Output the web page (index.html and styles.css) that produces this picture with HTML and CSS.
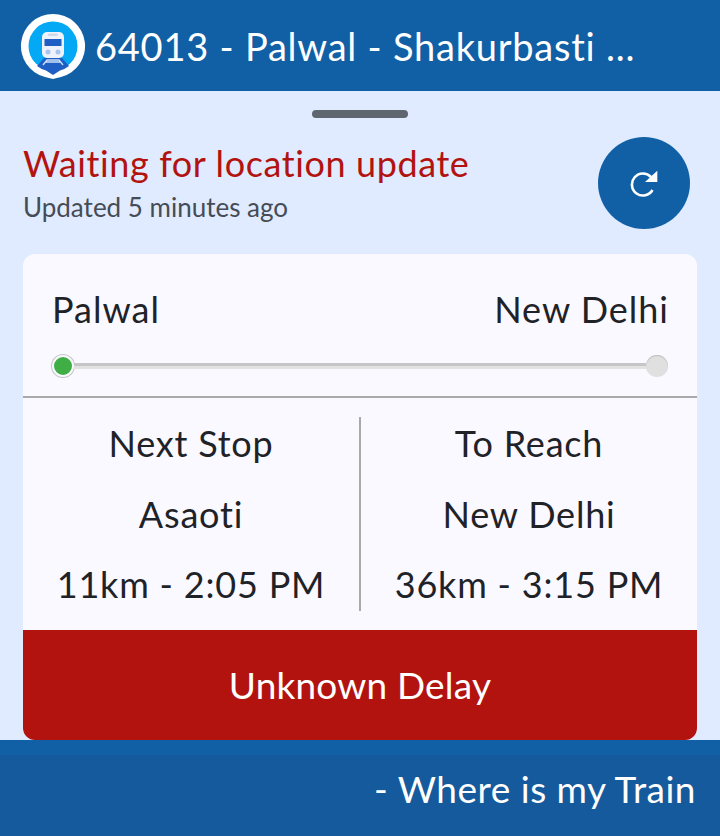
FILE: index.html
```html
<!DOCTYPE html>
<html lang="en">
<head>
<meta charset="utf-8">
<title>Where is my Train</title>
<link rel="stylesheet" href="styles.css">
</head>
<body>
<div class="page">
  <header class="topbar">
    <svg class="logo" viewBox="0 0 66 66" width="66" height="66">
      <path d="M33 1a32 32 0 0 1 8 63L33 66l-8-2A32 32 0 0 1 33 1z" fill="#fff"/>
      <circle cx="33" cy="33" r="24.500" fill="#03a9f4"/>
      <path d="M24 45h18l7 8a24.500 24.500 0 0 1-9 4.500L33 62l-7-4.500a24.500 24.500 0 0 1-9-4.500z" fill="#1f5fc4"/>
      <rect x="22" y="19" width="22" height="26" rx="5" fill="#eef3fb"/>
      <rect x="24.500" y="26" width="17" height="7" fill="#1f5fc4"/>
      <rect x="28" y="20.500" width="10" height="2.500" rx="1.200" fill="#cfd8ea"/>
      <circle cx="28" cy="39" r="2.500" fill="#a9c4ee"/>
      <circle cx="38" cy="39" r="2.500" fill="#a9c4ee"/>
      <path d="M23 52l4-5h12l4 5M26 49h14" fill="none" stroke="#cfe0f7" stroke-width="1.300"/>
    </svg>
    <h1 class="title">64013 - Palwal - Shakurbasti ...</h1>
  </header>
  <main class="sheet">
    <div class="handle"></div>
    <section class="status">
      <div class="status-text">
        <div class="waiting">Waiting for location update</div>
        <div class="updated">Updated 5 minutes ago</div>
      </div>
      <button class="refresh" aria-label="Refresh">
        <svg viewBox="0 0 28 28" width="28" height="28">
          <path d="M22.500 21A11 11 0 1 1 21 8" fill="none" stroke="#fff" stroke-width="2.600"/>
          <path d="M27.300 1.700V13H15z" fill="#fff"/>
        </svg>
      </button>
    </section>
    <section class="card">
      <div class="route">
        <div class="ends"><span>Palwal</span><span>New Delhi</span></div>
        <div class="track">
          <span class="dot start"></span>
          <span class="line"></span>
          <span class="dot end"></span>
        </div>
      </div>
      <div class="stops">
        <div class="stop">
          <div class="stop-label">Next Stop</div>
          <div>Asaoti</div>
          <div>11km - 2:05 PM</div>
        </div>
        <div class="stop">
          <div class="stop-label">To Reach</div>
          <div>New Delhi</div>
          <div>36km - 3:15 PM</div>
        </div>
      </div>
      <div class="delay">Unknown Delay</div>
    </section>
  </main>
  <footer class="bottombar">- Where is my Train</footer>
</div>
</body>
</html>
```
FILE: styles.css
```css
* { box-sizing: border-box; }
html, body { margin: 0; padding: 0; }
body { font-family: "Lato", "Noto Sans", sans-serif; color: #1f2328; background: #e0ebff; }
.page { width: 720px; height: 836px; display: flex; flex-direction: column; overflow: hidden; }

.topbar { height: 91px; background: #1160a6; display: flex; align-items: center; padding: 0 0 0 20px; gap: 9px; flex: none; }
.logo { flex: none; display: block; }
.title { margin: 0; font-size: 38px; font-weight: 400; color: #fff; white-space: nowrap; letter-spacing: 0.77px; }

.sheet { flex: 1; background: #e0ebff; padding: 19px 23px 0; display: flex; flex-direction: column; }
.handle { width: 96px; height: 8px; border-radius: 4px; background: #5f6670; align-self: center; flex: none; }

.status { display: flex; justify-content: space-between; align-items: flex-start; margin-top: 19px; height: 92px; padding-right: 7px; flex: none; }
.waiting { font-size: 36px; line-height: 40px; color: #b2130f; margin-top: 6px; letter-spacing: 0.6px; }
.updated { font-size: 26px; line-height: 30px; color: #454c55; margin-top: 9px; }
.refresh { width: 92px; height: 92px; border-radius: 50%; border: 0; padding: 0; background: #1160a6; display: flex; align-items: center; justify-content: center; }
.refresh svg { display: block; }

.card { margin-top: 25px; height: 486px; background: #faf9ff; border-radius: 12px; overflow: hidden; display: flex; flex-direction: column; }
.route { height: 144px; padding: 33px 29px 0; border-bottom: 2px solid #a9a9a9; flex: none; }
.ends { display: flex; justify-content: space-between; font-size: 36px; line-height: 44px; letter-spacing: 1px; margin-right: -1px; }
.track { display: flex; align-items: center; margin-top: 24px; }
.dot { width: 22px; height: 22px; border-radius: 50%; flex: none; }
.dot.start { background: #3fae44; border: 2px solid #faf9ff; box-shadow: 0 0 0 1px #c4c8c4; }
.dot.end { background: #e0e0e0; box-shadow: inset 0 1px 1px #bdbdbd; }
.line { flex: 1; height: 6px; background: #e2e2e2; border-top: 3px solid #c6c6c6; margin-top: -1px; }

.stops { flex: 1; display: grid; grid-template-columns: 338px 1fr; padding: 19px 0; }
.stop { display: flex; flex-direction: column; justify-content: space-between; align-items: center; font-size: 36px; line-height: 54px; letter-spacing: 0.8px; }
.stop-label { margin-top: -1px; }
.stop:first-child { border-right: 2px solid #a9a9a9; }

.delay { height: 110px; background: #b2130f; color: #fff; font-size: 37px; display: flex; align-items: center; justify-content: center; flex: none; letter-spacing: 0.2px; padding-bottom: 2px; }

.bottombar { height: 96px; flex: none; background: linear-gradient(#1160a6 0, #1160a6 15px, #155a9c 15px); color: #fff; font-size: 37px; display: flex; align-items: center; justify-content: flex-end; padding: 1px 24px 0 0; letter-spacing: 0.5px; }
```
